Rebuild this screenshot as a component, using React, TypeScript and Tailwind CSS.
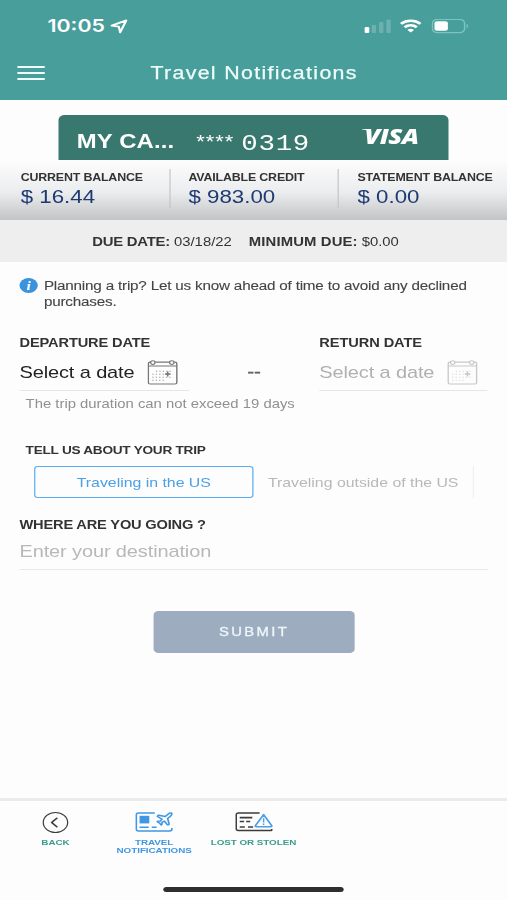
import { ChevronLeft, Plane } from 'lucide-react';

const balances = [
  { label: 'CURRENT BALANCE', value: '$ 16.44', cell: 'pl-[17px]' },
  { label: 'AVAILABLE CREDIT', value: '$ 983.00', cell: 'border-l border-[#c4c6c8] pl-[15px]' },
  { label: 'STATEMENT BALANCE', value: '$ 0.00', cell: 'border-l border-[#c4c6c8] pl-[15px]' },
];

function StatusBar() {
  return (
    <div className="flex h-[50px] items-center pt-[2px] pl-[39px] pr-[31px] text-white">
      <span className="font-[Inter] text-[17.5px] font-semibold leading-none">10:05</span>
      <svg className="ml-[4px] h-[15px] w-[15px]" viewBox="0 0 15 15" fill="none" stroke="currentColor" strokeWidth="1.8" strokeLinejoin="round">
        <path d="M13.6 1.4 8.6 13.4 7.5 7.6 1.6 6.6Z" />
      </svg>
      <svg className="ml-auto h-[14px] w-[22px]" viewBox="0 0 22 14" fill="currentColor">
        <rect x="0" y="8" width="4" height="6" rx="1.2" />
        <g opacity="0.2">
          <rect x="6" y="6" width="3.6" height="8" rx="1" />
          <rect x="12" y="3" width="3.6" height="11" rx="1" />
          <rect x="18" y="0.5" width="3.6" height="13.5" rx="1" />
        </g>
      </svg>
      <svg className="ml-[7px] h-[14px] w-[18px]" viewBox="0 0 18 14" fill="none" stroke="currentColor" strokeWidth="2.5">
        <path d="M1 4.9C5.5.7 12.5.7 17 4.9" />
        <path d="M4 8.3c2.9-2.6 7.1-2.6 10 0" />
        <path d="M9 13.6 6.3 10.9c1.5-1.4 3.9-1.4 5.4 0Z" fill="currentColor" stroke="none" />
      </svg>
      <svg className="ml-[8px] h-[15px] w-[31px]" viewBox="0 0 31 15" fill="none">
        <rect x="0.8" y="0.3" width="26.4" height="13.4" rx="4" stroke="#7cc4bf" strokeWidth="1.2" />
        <path d="M28.8 4.8c1.6.6 1.6 4 0 4.6Z" fill="#7cc4bf" />
        <rect x="2.5" y="2.2" width="11" height="9.6" rx="2" fill="#fff" />
      </svg>
    </div>
  );
}

function CalendarIcon({ className }: { className: string }) {
  return (
    <svg className={`h-[25px] w-[25px] shrink-0 ${className}`} viewBox="0 0 25 25" fill="none" stroke="currentColor">
      <rect x="0.7" y="2.2" width="23.4" height="21.8" rx="1.5" strokeWidth="1.2" />
      <path d="M1 6h23" strokeWidth="1" />
      <circle cx="4.4" cy="2.6" r="1.8" fill="#fdfdfd" strokeWidth="1" />
      <circle cx="20" cy="2.6" r="1.8" fill="#fdfdfd" strokeWidth="1" />
      <path d="M7 11.3h14M4 14.3h17M4 17.3h17M4 20.3h11" strokeWidth="1" strokeDasharray="1 1.8" opacity="0.75" />
      <path d="M16.6 11.5v5M14.4 14h4.4" strokeWidth="1.3" />
    </svg>
  );
}

function TravelIcon() {
  return (
    <svg className="h-[20px] w-[31px]" viewBox="0 0 31 20" fill="none" stroke="currentColor" strokeWidth="1.4">
      <path d="M16 1H2.5A1.7 1.7 0 0 0 .8 2.7V17.3A1.7 1.7 0 0 0 2.5 19H28.3A1.7 1.7 0 0 0 30 17.3V16" />
      <rect x="3.5" y="3.8" width="8" height="7.6" fill="currentColor" stroke="none" />
      <path d="M3.5 15.3h7.5M13.5 15.3h4" />
      <Plane x={16} y={-0.8} width={15.8} height={15.8} strokeWidth={2.1} />
    </svg>
  );
}

function LostIcon() {
  return (
    <svg className="h-[20px] w-[31px]" viewBox="0 0 31 20" fill="none" stroke="#3c3c3c" strokeWidth="1.3">
      <path d="M20 1H2.5A1.7 1.7 0 0 0 .8 2.7V16.8A1.7 1.7 0 0 0 2.5 18.5H29.5A.6.6 0 0 0 30 17.9V17" />
      <path d="M3.7 5.6h10.3" strokeWidth="1.9" />
      <path d="M3.7 9.4h3.6M9 9.4h3.3M3.7 15h4.2M10.5 15h4.2" strokeWidth="1.5" />
      <path d="M23.3 2.6 29.9 13.6a.8.8 0 0 1-.7 1.2H17.3a.8.8 0 0 1-.7-1.2Z" stroke="#4a9fe6" strokeWidth="1.5" strokeLinejoin="round" />
      <path d="M23.3 6.3v4.3M23.3 11.6v1.3" stroke="#4a9fe6" strokeWidth="1.2" />
    </svg>
  );
}

export default function App() {
  return (
    <div className="h-[900px] w-[507px] overflow-hidden bg-[#fdfdfd]">
      <div className="flex h-[900px] w-[416px] origin-top-left scale-x-[1.21875] flex-col whitespace-nowrap font-['Liberation_Sans',Arial,sans-serif] text-[#333]">
        <header className="h-[100px] shrink-0 bg-[#489e9b]">
          <StatusBar />
          <div className="flex h-[46px] items-center px-[14px] text-[#eefcfa]">
            <div className="flex w-[23px] shrink-0 flex-col gap-[4px]">
              <span className="h-[2px] rounded bg-current" />
              <span className="h-[2px] rounded bg-current" />
              <span className="h-[2px] rounded bg-current" />
            </div>
            <h1 className="grow pr-[22px] text-center text-[17.5px] tracking-[1.1px] [-webkit-text-stroke:0.25px]">Travel Notifications</h1>
          </div>
        </header>

        <section className="shrink-0">
          <div className="mx-[48px] mt-[15px] flex h-[45px] items-center rounded-t-[5px] bg-[#39786f] pl-[15px] text-white">
            <span className="w-[98px] pt-[8px] text-[19.6px] font-bold tracking-[0.1px]">MY CA...</span>
            <span className="w-[37px] pt-[10px] text-[18px] tracking-[0.8px]">****</span>
            <span className="w-[101px] pt-[14px] font-['Liberation_Mono',monospace] text-[22.5px] leading-none tracking-[0.6px]">0319</span>
            <span className="relative -top-[1px] font-['Open_Sans',sans-serif] text-[21px] font-extrabold italic leading-none tracking-[-0.4px]">
              VISA
              <svg className="absolute -left-[2px] top-[3px] h-[4px] w-[8px]" viewBox="0 0 8 4" fill="currentColor">
                <path d="M0 0h6.5L8 4C6 2 3 .8 0 .6Z" />
              </svg>
            </span>
          </div>
          <div className="grid h-[60px] grid-cols-3 bg-linear-to-b from-[#fdfdfd] via-[#ebecee] via-55% to-[#c3c4c6] pt-[9px]">
            {balances.map((b) => (
              <div key={b.label} className={`h-[39px] ${b.cell}`}>
                <p className="pt-[2px] text-[10.2px] font-bold leading-[13px] tracking-[-0.15px]">{b.label}</p>
                <p className="text-[18.3px] leading-[25px] text-[#1d3a72]">{b.value}</p>
              </div>
            ))}
          </div>
          <div className="flex h-[42px] items-center justify-center gap-[14px] bg-[#eeeeee] pr-[13px] pt-[2px] text-[12.2px]">
            <span><b className="tracking-[-0.2px]">DUE DATE:</b> 03/18/22</span>
            <span><b className="tracking-[0.1px]">MINIMUM DUE:</b> $0.00</span>
          </div>
        </section>

        <main className="flex grow flex-col px-[16px] pt-[16px]">
          <div className="flex gap-[5px]">
            <span className="flex h-[15px] w-[15px] shrink-0 items-center justify-center rounded-full bg-[#3a93dc] font-['Liberation_Serif',serif] text-[13px] font-bold italic leading-none text-white">i</span>
            <p className="text-[12.5px] leading-[16px] tracking-[-0.16px] text-[#444] [-webkit-text-stroke:0.1px]">
              Planning a trip? Let us know ahead of time to avoid any declined
              <br />
              purchases.
            </p>
          </div>

          <div className="mt-[25px] flex">
            <div className="w-[139px]">
              <label className="block text-[12px] font-bold leading-[16px] tracking-[-0.12px]">DEPARTURE DATE</label>
              <div className="flex h-[40px] items-center border-b border-[#e6e6e6] pt-[4px] text-[#222]">
                <span className="w-[104.500px] text-[16.4px] tracking-[-0.1px]">Select a date</span>
                <CalendarIcon className="text-[#777]" />
              </div>
            </div>
            <span className="w-[107px] pt-[25px] text-center text-[17px] leading-[24px] text-[#666] [-webkit-text-stroke:0.3px]">--</span>
            <div className="w-[138px]">
              <label className="block text-[12px] font-bold leading-[16px] tracking-[-0.08px]">RETURN DATE</label>
              <div className="flex h-[40px] items-center border-b border-[#e6e6e6] pt-[4px] text-[#b0b0b0]">
                <span className="w-[105px] text-[16.4px] tracking-[-0.1px]">Select a date</span>
                <CalendarIcon className="text-[#c8c8c8]" />
              </div>
            </div>
          </div>
          <p className="mt-[5px] pl-[5px] text-[12.2px] leading-[16px] text-[#909090]">The trip duration can not exceed 19 days</p>

          <h2 className="mt-[30px] pl-[5px] text-[11.2px] font-bold leading-[16px] tracking-[-0.22px]">TELL US ABOUT YOUR TRIP</h2>
          <div className="mt-[8px] flex h-[32px] pl-[12px] text-[13px]">
            <button className="w-[180px] rounded-[3px] border-[1.5px] border-[#5aabef] pt-[1px] text-[#4a9fe6]">Traveling in the US</button>
            <button className="w-[181px] border-r border-[#f0f0f0] pt-[1px] text-[#b8b8b8]">Traveling outside of the US</button>
          </div>

          <label className="mt-[19px] block text-[12px] font-bold leading-[16px] tracking-[-0.15px]">WHERE ARE YOU GOING ?</label>
          <p className="h-[37px] border-b border-[#e8e8e8] pt-[6px] text-[16.4px] leading-[24px] tracking-[-0.1px] text-[#b8b8b8]">Enter your destination</p>

          <button className="ml-[1px] mt-[41px] h-[42px] w-[165px] self-center rounded-[4px] bg-[#9dacbf] text-[12.2px] tracking-[1.9px] text-[#eef6fb] [-webkit-text-stroke:0.3px]">SUBMIT</button>
        </main>

        <footer className="flex h-[102px] shrink-0 flex-col border-t-[3px] border-[#ebebeb] text-[8.1px] font-bold leading-[8px] tracking-[-0.05px] text-[#3a9c8c]">
          <nav className="flex pl-[5px] pt-[11px]">
            <a className="flex w-[81px] flex-col items-center">
              <span className="flex h-[21px] w-[21px] items-center justify-center rounded-full border-[1.5px] border-[#3c3c3c] text-[#3c3c3c]">
                <ChevronLeft size={17} strokeWidth={2} className="-ml-[2px] shrink-0" />
              </span>
              <span className="mt-[6px]">BACK</span>
            </a>
            <a className="flex w-[81px] flex-col items-center text-center text-[#3f97e2]">
              <TravelIcon />
              <span className="mt-[7px]">TRAVEL<br />NOTIFICATIONS</span>
            </a>
            <a className="flex w-[82px] flex-col items-center">
              <LostIcon />
              <span className="mt-[7px]">LOST OR STOLEN</span>
            </a>
          </nav>
          <span className="mb-[8px] mt-auto h-[5px] w-[148px] self-center rounded-full bg-[#2e2e2e]" />
        </footer>
      </div>
    </div>
  );
}
